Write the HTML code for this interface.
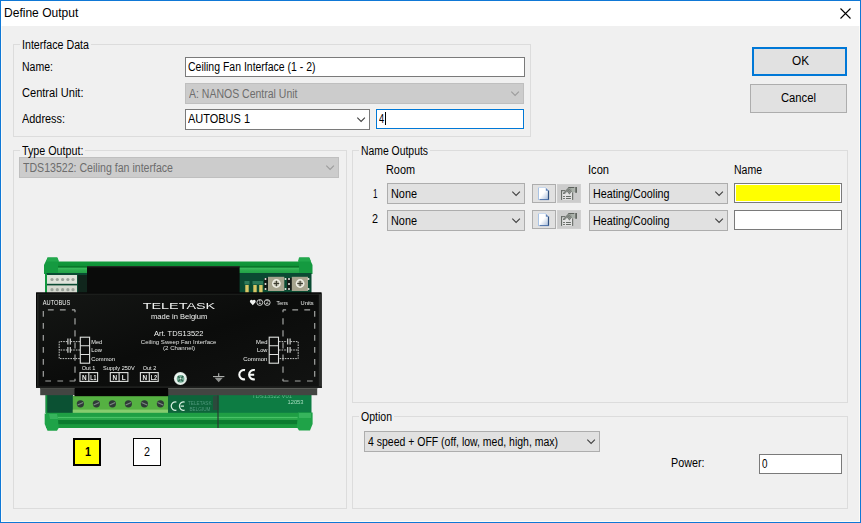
<!DOCTYPE html>
<html><head><meta charset="utf-8"><title>Define Output</title>
<style>
html,body{margin:0;padding:0;}
body{width:861px;height:523px;overflow:hidden;background:#f0f0f0;font-family:"Liberation Sans",sans-serif;font-size:12px;position:relative;}
.a{position:absolute;box-sizing:border-box;}
.t{position:absolute;white-space:pre;line-height:14px;font-size:12px;transform-origin:0 50%;color:#000;}
.gb{position:absolute;box-sizing:border-box;border:1px solid #dcdcdc;}
.gap{position:absolute;background:#f0f0f0;height:3px;}
.inp{position:absolute;box-sizing:border-box;background:#fff;border:1px solid #7a7a7a;}
.cb{position:absolute;box-sizing:border-box;background:#e1e1e1;border:1px solid #adadad;}
.cbd{position:absolute;box-sizing:border-box;background:#cccccc;border:1px solid #bfbfbf;}
.btn{position:absolute;box-sizing:border-box;background:#e1e1e1;border:1px solid #adadad;}
svg{position:absolute;overflow:visible;}
</style></head><body>
<!-- window frame -->
<div class="a" style="left:0;top:0;width:861px;height:523px;border:1px solid #0f78d6;"></div>
<div class="a" style="left:1px;top:1px;width:859px;height:521px;border:1px solid #fcfaf6;"></div>
<div class="a" style="left:1px;top:1px;width:859px;height:25px;background:#fff;"></div>
<svg style="left:840px;top:8px" width="11" height="11" viewBox="0 0 11 11"><path d="M0.5 0.5L10.5 10.5M10.5 0.5L0.5 10.5" stroke="#000" stroke-width="1.1" fill="none"/></svg>

<!-- Interface Data -->
<div class="gb" style="left:13px;top:44px;width:518px;height:93px;"></div>
<div class="gap" style="left:20px;top:43px;width:71px;"></div>
<div class="inp" style="left:185px;top:57px;width:340px;height:20px;"></div>
<div class="cbd" style="left:185px;top:83px;width:339px;height:21px;"></div>
<div class="inp" style="left:185px;top:109px;width:185px;height:21px;"></div>
<div class="inp" style="left:376px;top:109px;width:148px;height:20px;border-color:#0078d7;box-shadow:0 0 0 1px #f8f2ea;"></div>
<div class="a" style="left:385px;top:112px;width:1px;height:13px;background:#000;"></div>

<!-- OK / Cancel -->
<div class="btn" style="left:752px;top:47px;width:95px;height:29px;border:2px solid #0078d7;"></div>
<div class="btn" style="left:750px;top:84px;width:97px;height:29px;"></div>

<!-- Type Output -->
<div class="gb" style="left:13px;top:150px;width:334px;height:359px;"></div>
<div class="gap" style="left:20px;top:149px;width:65px;"></div>
<div class="cbd" style="left:19px;top:157px;width:320px;height:21px;"></div>
<svg style="left:30px;top:252px;will-change:transform;overflow:hidden" width="300" height="182" viewBox="30 252 300 182" font-family="'Liberation Sans',sans-serif">
<defs>
<linearGradient id="railT" x1="0" y1="0" x2="0" y2="1"><stop offset="0" stop-color="#13993c"/><stop offset="0.34" stop-color="#0f9237"/><stop offset="0.40" stop-color="#0a782b"/><stop offset="0.46" stop-color="#0a782b"/><stop offset="0.52" stop-color="#3cbc5e"/><stop offset="0.7" stop-color="#2bab4e"/><stop offset="1" stop-color="#1f9f44"/></linearGradient>
<linearGradient id="railB" x1="0" y1="0" x2="0" y2="1"><stop offset="0" stop-color="#1f9f44"/><stop offset="0.24" stop-color="#1f9f44"/><stop offset="0.28" stop-color="#4cc66a"/><stop offset="0.33" stop-color="#45c064"/><stop offset="0.37" stop-color="#2aa84c"/><stop offset="0.45" stop-color="#27a549"/><stop offset="0.49" stop-color="#0c7c30"/><stop offset="0.73" stop-color="#0c7c30"/><stop offset="0.78" stop-color="#1a9a3e"/><stop offset="1" stop-color="#1a9a3e"/></linearGradient>
<linearGradient id="panel" x1="0" y1="0" x2="1" y2="1"><stop offset="0" stop-color="#151715"/><stop offset="0.5" stop-color="#0b0c0b"/><stop offset="1" stop-color="#121312"/></linearGradient>
</defs>
<!-- top rail -->
<path d="M47.6 257.5H57L58.8 262H298.4L299.4 257.5H309L312.5 265V274H44V265Z" fill="#159a40"/>
<rect x="58" y="261.5" width="241" height="12.5" fill="url(#railT)"/>
<path d="M47.5 257.5H57.5L59 261.5H46.5Z" fill="#22a84c"/>
<path d="M299 257.5H309.5L311 261.5H298Z" fill="#22a84c"/>
<!-- top pcb -->
<rect x="46" y="273" width="265.5" height="20" fill="#0a4a32"/>
<rect x="45" y="273.5" width="2" height="19.5" fill="#12983e"/>
<!-- white connectors -->
<rect x="47" y="275" width="30" height="8.8" fill="#dfe3da"/>
<rect x="47" y="285.4" width="30" height="7.6" fill="#d5d9cf"/>
<g fill="#9aa39a"><circle cx="52" cy="279.5" r="1.6"/><circle cx="57.3" cy="279.5" r="1.6"/><circle cx="62.6" cy="279.5" r="1.6"/><circle cx="67.9" cy="279.5" r="1.6"/><circle cx="73" cy="279.5" r="1.6"/>
<circle cx="52" cy="289.7" r="1.6"/><circle cx="57.3" cy="289.7" r="1.6"/><circle cx="62.6" cy="289.7" r="1.6"/><circle cx="67.9" cy="289.7" r="1.6"/><circle cx="73" cy="289.7" r="1.6"/></g>
<rect x="78" y="275" width="9" height="18" fill="#10261c"/>
<!-- top black block -->
<rect x="87" y="266.3" width="152.6" height="27" fill="#0a0b0a"/>
<rect x="87" y="266.3" width="152.6" height="1" fill="#2a2c2a"/>
<!-- leds -->
<g fill="#d9c766"><rect x="245.3" y="285" width="3.4" height="8"/><rect x="253.3" y="285" width="3.4" height="8"/><rect x="259.2" y="285" width="3.4" height="8"/></g>
<g fill="#2e7a5a"><rect x="244.5" y="281" width="5" height="3.5"/><rect x="252.5" y="281" width="10.5" height="3.5"/></g>
<!-- rotary switches -->
<g>
<rect x="264" y="278" width="5" height="12" fill="#141a16"/><rect x="287" y="278" width="5" height="12" fill="#141a16"/>
<rect x="268" y="276.8" width="16.3" height="14.2" fill="#a6a48e"/><rect x="291.8" y="276.8" width="16.2" height="14.2" fill="#a6a48e"/>
<circle cx="276.4" cy="283.5" r="4.4" fill="#eeeee4"/><circle cx="300.1" cy="283.5" r="4.4" fill="#eeeee4"/><circle cx="276.4" cy="283.5" r="2.7" fill="#b4b4a2"/><circle cx="300.1" cy="283.5" r="2.7" fill="#b4b4a2"/>
<path d="M273.6 283.5H279.2M276.4 280.7V286.3M297.3 283.5H302.9M300.1 280.7V286.3" stroke="#3c3c32" stroke-width="1.1"/>
<g fill="#e8e8e0"><circle cx="265.5" cy="279" r="1"/><circle cx="265.5" cy="284" r="1"/><circle cx="265.5" cy="289" r="1"/><circle cx="285.5" cy="279" r="1"/><circle cx="285.5" cy="289" r="1"/><circle cx="289" cy="279" r="1"/><circle cx="289" cy="284" r="1"/><circle cx="289" cy="289" r="1"/><circle cx="308.5" cy="279" r="1"/><circle cx="308.5" cy="289" r="1"/></g>
</g>
<!-- bottom pcb + terminal -->
<rect x="45.6" y="394" width="27.4" height="19" fill="#0b5133"/><rect x="45.6" y="395" width="1.6" height="18" fill="#14963e"/>
<rect x="168" y="394" width="50" height="19" fill="#0d643a"/>
<rect x="218" y="394" width="93.5" height="19" fill="#0d7c43"/>
<rect x="72.8" y="396" width="95.2" height="17.4" fill="#55b142"/>
<rect x="72.8" y="409.6" width="95.2" height="3.8" fill="#86cc6e"/>
<g fill="#2f3b37"><circle cx="80.4" cy="403.8" r="3.6"/><circle cx="96.4" cy="403.8" r="3.6"/><circle cx="112.4" cy="403.8" r="3.6"/><circle cx="128.4" cy="403.8" r="3.6"/><circle cx="144.4" cy="403.8" r="3.6"/><circle cx="160.4" cy="403.8" r="3.6"/></g>
<path d="M77.6 405L83.2 402.6M93.6 405L99.2 402.6M109.6 405L115.2 402.6M125.6 405L131.2 402.6M141.6 402.6L147.2 405M157.6 402.6L163.2 405" stroke="#7d8a84" stroke-width="1.1"/>
<!-- CE on pcb -->
<g fill="none" stroke="#d4eede" stroke-width="1.25"><path d="M176.4 402.02A4.2 4.2 0 1 0 176.4 410.18"/><path d="M184.6 402.02A4.2 4.2 0 1 0 184.6 410.18M180.6 406.1H184"/></g>
<text x="188" y="405.3" font-size="4.6" fill="#4f987c" textLength="23.5" lengthAdjust="spacingAndGlyphs">TELETASK</text>
<text x="189.5" y="410.8" font-size="4.6" fill="#4f987c" textLength="21" lengthAdjust="spacingAndGlyphs">BELGIUM</text>
<rect x="213" y="396" width="5.5" height="14" fill="#2b4a3c"/>
<text x="252" y="397.6" font-size="5" fill="#5bb98a" textLength="40" lengthAdjust="spacingAndGlyphs">TDS13522 V01</text>
<text x="287.5" y="404" font-size="5.6" fill="#a8dcc0" textLength="16" lengthAdjust="spacingAndGlyphs">12053</text>
<!-- bottom rail -->
<rect x="46" y="412.8" width="265" height="15.2" fill="url(#railB)"/>
<path d="M44.7 413.4H57.5L58.7 428L57 430.7H47.5L44.7 424Z" fill="#1fa348"/>
<path d="M298 412.4H312.6V424L310 430.6H299L296.8 427Z" fill="#1fa348"/>
<path d="M49 414H57L58 419H50Z" fill="#36b45c"/>
<path d="M299 413H311V418H299Z" fill="#36b45c"/>
<rect x="217.4" y="394" width="1.2" height="34" fill="#2a3a32"/>
<!-- gray band under panel -->
<rect x="40.2" y="386" width="277" height="9.2" fill="#434542"/>
<rect x="74.5" y="386" width="93.7" height="10.2" fill="#050505"/>
<rect x="168.2" y="388" width="149" height="1" fill="#5c5e5a"/><rect x="40.2" y="388" width="34.3" height="1" fill="#4c4e4a"/>
<!-- front panel -->
<rect x="36.1" y="292.5" width="285.4" height="95.5" fill="url(#panel)"/>
<rect x="36.6" y="293" width="284.4" height="94.5" fill="none" stroke="#040404" stroke-width="1"/>
<rect x="37.4" y="293.8" width="282" height="1" fill="#1e211e"/>
<rect x="37.3" y="294" width="1.1" height="92" fill="#2a2d2a"/>
<rect x="318.8" y="294" width="2.7" height="94" fill="#2a2c2a"/>
<rect x="36.1" y="386.2" width="285.4" height="1.8" fill="#1d1f1d"/>
<!-- dashed rects -->
<g fill="none" stroke="#a2a4a2" stroke-width="1.2">
<path d="M43.3 311V381" stroke-dasharray="5.8 6.2"/>
<path d="M47.9 309.8H75" stroke-dasharray="5.8 6.2"/>
<path d="M75 309.8V381" stroke-dasharray="6.2 5.9" stroke-dashoffset="3.7"/>
<path d="M45.3 381H75.6" stroke-dasharray="5.7 6.4"/>
</g>
<g fill="none" stroke="#a2a4a2" stroke-width="1.2" transform="translate(358,0) scale(-1,1)">
<path d="M43.3 311V381" stroke-dasharray="5.8 6.2"/>
<path d="M47.9 309.8H75" stroke-dasharray="5.8 6.2"/>
<path d="M75 309.8V381" stroke-dasharray="6.2 5.9" stroke-dashoffset="3.7"/>
<path d="M45.3 381H75.6" stroke-dasharray="5.7 6.4"/>
</g>
<!-- labels -->
<g fill="#f0f2f0">
<text x="42.8" y="305" font-size="6.3" textLength="27.4" lengthAdjust="spacingAndGlyphs">AUTOBUS</text>
<text x="142.7" y="308.9" font-size="9" textLength="72.5" lengthAdjust="spacingAndGlyphs" fill="#f0f2f0">TELETASK</text>
<text x="151" y="319.2" font-size="8" textLength="56.3" lengthAdjust="spacingAndGlyphs">made in Belgium</text>
<text x="154" y="336" font-size="7.8" textLength="49.4" lengthAdjust="spacingAndGlyphs">Art. TDS13522</text>
<text x="140.8" y="343.6" font-size="6.2" textLength="75.6" lengthAdjust="spacingAndGlyphs" fill="#e0e2e0">Ceiling Sweep Fan Interface</text>
<text x="163" y="350.4" font-size="6.2" textLength="32" lengthAdjust="spacingAndGlyphs" fill="#e0e2e0">(2 Channel)</text>
<path d="M252.8 305.2L250.1 302.2A1.5 1.5 0 0 1 252.8 300.6A1.5 1.5 0 0 1 255.5 302.2Z"/><circle cx="259.8" cy="302.5" r="2.9" fill="none" stroke="#e4e6e4" stroke-width="0.9"/><circle cx="267.2" cy="302.5" r="2.9" fill="none" stroke="#e4e6e4" stroke-width="0.9"/><text x="258.6" y="304.2" font-size="4.8">1</text><text x="265.9" y="304.2" font-size="4.8">2</text>
<text x="276.6" y="305" font-size="6.2" textLength="11.2" lengthAdjust="spacingAndGlyphs">Tens</text>
<text x="300.6" y="305" font-size="6.2" textLength="13" lengthAdjust="spacingAndGlyphs">Units</text>
<text x="91.3" y="343.6" font-size="6.2" textLength="10.9" lengthAdjust="spacingAndGlyphs">Med</text>
<text x="91.3" y="352.2" font-size="6.2" textLength="10.5" lengthAdjust="spacingAndGlyphs">Low</text>
<text x="91.3" y="360.8" font-size="6.2" textLength="23.7" lengthAdjust="spacingAndGlyphs">Common</text>
<text x="256" y="343.6" font-size="6.2" textLength="11.4" lengthAdjust="spacingAndGlyphs">Med</text>
<text x="257" y="352.2" font-size="6.2" textLength="10.4" lengthAdjust="spacingAndGlyphs">Low</text>
<text x="243.2" y="360.8" font-size="6.2" textLength="24.2" lengthAdjust="spacingAndGlyphs">Common</text>
<text x="81.7" y="370.2" font-size="6" textLength="13.7" lengthAdjust="spacingAndGlyphs">Out 1</text>
<text x="103" y="370.2" font-size="6" textLength="31.7" lengthAdjust="spacingAndGlyphs">Supply 250V</text>
<text x="142.8" y="370.2" font-size="6" textLength="13.4" lengthAdjust="spacingAndGlyphs">Out 2</text>
<text x="82" y="379.6" font-size="6.4" font-weight="700">N</text><text x="90.3" y="379.6" font-size="6.4" font-weight="700" textLength="6" lengthAdjust="spacingAndGlyphs">L1</text>
<text x="112.4" y="379.6" font-size="6.4" font-weight="700">N</text><text x="121.7" y="379.6" font-size="6.4" font-weight="700">L</text>
<text x="142.4" y="379.6" font-size="6.4" font-weight="700">N</text><text x="150.7" y="379.6" font-size="6.4" font-weight="700" textLength="6.4" lengthAdjust="spacingAndGlyphs">L2</text>
</g>
<!-- terminal boxes -->
<g fill="none" stroke="#e0e2e0" stroke-width="1.1">
<rect x="80.3" y="337.2" width="9.3" height="26"/><path d="M80.3 345.8H89.6M80.3 354.5H89.6"/>
<rect x="269.2" y="337.2" width="9.3" height="26"/><path d="M269.2 345.8H278.5M269.2 354.5H278.5"/>
<rect x="80" y="372.6" width="17.6" height="8.8"/><path d="M88.8 372.6V381.4"/>
<rect x="110.3" y="372.6" width="17.6" height="8.8"/><path d="M119.1 372.6V381.4"/>
<rect x="140.4" y="372.6" width="17.8" height="8.8"/><path d="M149.3 372.6V381.4"/>
</g>
<!-- capacitor circuits -->
<g fill="none" stroke="#c8cac8" stroke-width="1" stroke-dasharray="1.6 1">
<path d="M80 341.6H70.8M67.4 341.6H59.2V358.6H80M80 350H70.8M67.4 350H59.2"/>
<path d="M279 341.6H287.2M290.6 341.6H298.2V358.6H279M279 350H287.2M290.6 350H298.2"/>
</g>
<g stroke="#e0e2e0" stroke-width="1.1"><path d="M67.9 338.6V344.4M70.3 338.6V344.4M67.9 347V352.8M70.3 347V352.8M287.7 338.6V344.4M290.1 338.6V344.4M287.7 347V352.8M290.1 347V352.8"/></g>
<!-- screw -->
<circle cx="180.4" cy="378.5" r="6.5" fill="#dce8e2"/><circle cx="180.2" cy="378.2" r="5.2" fill="#f2f7f4"/><circle cx="180.6" cy="378.8" r="3.9" fill="#6ea890"/>
<path d="M178 376.2L183 381.4M183.2 376L178.2 381.6" stroke="#2f5f4c" stroke-width="1.3"/><circle cx="180.5" cy="378.6" r="1" fill="#cfe6da"/>
<!-- ground symbol -->
<path d="M218.7 373.2V376.6" stroke="#b4b6b4" stroke-width="1.1"/><path d="M213 376.6H224.4" stroke="#bcbebc" stroke-width="1"/><path d="M214.6 377.8H222.8L218.7 382.3Z" fill="#8e908e"/>
<!-- CE -->
<g fill="none" stroke="#f8faf8" stroke-width="2.1"><path d="M245 370.11A4.7 4.7 0 1 0 245 379.29"/><path d="M254.8 370.11A4.7 4.7 0 1 0 254.8 379.29M250.2 374.7H254.2"/></g>
</svg>

<div class="a" style="left:73px;top:438px;width:28px;height:28px;background:#ffff00;border:2px solid #000;"></div>
<div class="a" style="left:133px;top:438px;width:28px;height:28px;background:#fff;border:1px solid #000;"></div>

<!-- Name Outputs -->
<svg style="left:0;top:0" width="0" height="0"><defs><pattern id="chk" width="2" height="2" patternUnits="userSpaceOnUse" patternTransform="rotate(45)"><rect width="2" height="2" fill="#d8dad8"/><rect width="1" height="1" fill="#5a5f5a"/><rect x="1" y="1" width="1" height="1" fill="#5a5f5a"/></pattern></defs></svg>
<div class="gb" style="left:352px;top:150px;width:496px;height:253px;"></div>
<div class="gap" style="left:359px;top:149px;width:71px;"></div>
<div class="cb" style="left:387px;top:183px;width:138px;height:21px;"></div>
<div class="cb" style="left:387px;top:210px;width:138px;height:21px;"></div>
<div class="btn" style="left:532px;top:184px;width:24px;height:19px;"></div>
<div class="btn" style="left:557px;top:184px;width:24px;height:19px;background:#cccccc;border-color:#d0d0d0;"></div>
<div class="btn" style="left:532px;top:210px;width:24px;height:19px;"></div>
<div class="btn" style="left:557px;top:210px;width:24px;height:19px;background:#cccccc;border-color:#d0d0d0;"></div>
<svg style="left:538px;top:187px" width="12" height="14" viewBox="0 0 12 14"><defs><linearGradient id="dg1" x1="0" y1="0" x2="1" y2="1"><stop offset="0.45" stop-color="#ffffff"/><stop offset="1" stop-color="#9db4d6"/></linearGradient></defs><path d="M0.5 0.5H8L11 3.5V13H0.5Z" fill="url(#dg1)"/><path d="M0.5 0.5V13" stroke="#a9c3e4" stroke-width="1"/><path d="M1 0.5H8" stroke="#c9d9ee" stroke-width="1"/><path d="M10.5 3.5V13" stroke="#2f4f7f" stroke-width="1.2"/><path d="M1.5 12.6H11" stroke="#4a70a8" stroke-width="1"/><path d="M7.8 0.8V3.8H10.8Z" fill="#5f83b8"/></svg><svg style="left:561px;top:187px" width="17" height="14" viewBox="0 0 17 14"><rect x="1" y="4.2" width="10.2" height="8.7" fill="#e2e2e2"/><path d="M7.2 0.4H13.6L14.2 5.3H10.6L9 3.2Z" fill="#a9b0a9"/><path d="M7 0.5H13.4" stroke="#5d625d" stroke-width="1"/><rect x="14.3" y="0" width="1.6" height="5.8" fill="#555a55"/><path d="M2.3 5.7L7.3 0.3L11 4.1L8.4 7.8L6 4.6L3.9 6.8Z" fill="#8d928d"/><path d="M3.2 5.8L7.6 1.2M4.2 6.4L8.4 2M6.6 4.4L9.4 1.8M7.4 5.6L10.2 2.8M8.2 6.8L10.8 4" stroke="#5a5f5a" stroke-width="0.7" stroke-dasharray="0.8 0.8"/><path d="M2.2 5.2V6.9H4Z" fill="#555a55"/><rect x="0" y="3.1" width="1.15" height="9.8" fill="#666b66"/><rect x="0" y="3.1" width="4.2" height="1.1" fill="#666b66"/><rect x="11.1" y="5.4" width="1.1" height="7.5" fill="#666b66"/><path d="M2.1 9.45H3.9M5 9.45H9.9M2.1 11.45H3.9M5 11.45H9.9" stroke="#666b66" stroke-width="1.1"/></svg><svg style="left:538px;top:213px" width="12" height="14" viewBox="0 0 12 14"><defs><linearGradient id="dg2" x1="0" y1="0" x2="1" y2="1"><stop offset="0.45" stop-color="#ffffff"/><stop offset="1" stop-color="#9db4d6"/></linearGradient></defs><path d="M0.5 0.5H8L11 3.5V13H0.5Z" fill="url(#dg2)"/><path d="M0.5 0.5V13" stroke="#a9c3e4" stroke-width="1"/><path d="M1 0.5H8" stroke="#c9d9ee" stroke-width="1"/><path d="M10.5 3.5V13" stroke="#2f4f7f" stroke-width="1.2"/><path d="M1.5 12.6H11" stroke="#4a70a8" stroke-width="1"/><path d="M7.8 0.8V3.8H10.8Z" fill="#5f83b8"/></svg><svg style="left:561px;top:213px" width="17" height="14" viewBox="0 0 17 14"><rect x="1" y="4.2" width="10.2" height="8.7" fill="#e2e2e2"/><path d="M7.2 0.4H13.6L14.2 5.3H10.6L9 3.2Z" fill="#a9b0a9"/><path d="M7 0.5H13.4" stroke="#5d625d" stroke-width="1"/><rect x="14.3" y="0" width="1.6" height="5.8" fill="#555a55"/><path d="M2.3 5.7L7.3 0.3L11 4.1L8.4 7.8L6 4.6L3.9 6.8Z" fill="#8d928d"/><path d="M3.2 5.8L7.6 1.2M4.2 6.4L8.4 2M6.6 4.4L9.4 1.8M7.4 5.6L10.2 2.8M8.2 6.8L10.8 4" stroke="#5a5f5a" stroke-width="0.7" stroke-dasharray="0.8 0.8"/><path d="M2.2 5.2V6.9H4Z" fill="#555a55"/><rect x="0" y="3.1" width="1.15" height="9.8" fill="#666b66"/><rect x="0" y="3.1" width="4.2" height="1.1" fill="#666b66"/><rect x="11.1" y="5.4" width="1.1" height="7.5" fill="#666b66"/><path d="M2.1 9.45H3.9M5 9.45H9.9M2.1 11.45H3.9M5 11.45H9.9" stroke="#666b66" stroke-width="1.1"/></svg>
<div class="cb" style="left:589px;top:183px;width:139px;height:21px;"></div>
<div class="cb" style="left:589px;top:210px;width:139px;height:21px;"></div>
<div class="inp" style="left:734px;top:183px;width:108px;height:20px;background:#ffff00;box-shadow:inset 0 0 0 1px #fff;"></div>
<div class="inp" style="left:734px;top:210px;width:108px;height:20px;"></div>

<!-- Option -->
<div class="gb" style="left:352px;top:416px;width:496px;height:93px;"></div>
<div class="gap" style="left:359px;top:415px;width:35px;"></div>
<div class="cb" style="left:364px;top:431px;width:236px;height:21px;"></div>
<div class="inp" style="left:759px;top:454px;width:83px;height:20px;"></div>

<svg style="left:510.5px;top:91px" width="9" height="6" viewBox="0 0 9 6"><path d="M0.3 0.6L4.1 4.4L7.9 0.6" stroke="#9c9c9c" stroke-width="1.1" fill="none"/></svg>
<svg style="left:356.5px;top:117px" width="9" height="6" viewBox="0 0 9 6"><path d="M0.3 0.6L4.1 4.4L7.9 0.6" stroke="#404040" stroke-width="1.1" fill="none"/></svg>
<svg style="left:325.5px;top:165px" width="9" height="6" viewBox="0 0 9 6"><path d="M0.3 0.6L4.1 4.4L7.9 0.6" stroke="#9c9c9c" stroke-width="1.1" fill="none"/></svg>
<svg style="left:511.5px;top:191px" width="9" height="6" viewBox="0 0 9 6"><path d="M0.3 0.6L4.1 4.4L7.9 0.6" stroke="#404040" stroke-width="1.1" fill="none"/></svg>
<svg style="left:511.5px;top:218px" width="9" height="6" viewBox="0 0 9 6"><path d="M0.3 0.6L4.1 4.4L7.9 0.6" stroke="#404040" stroke-width="1.1" fill="none"/></svg>
<svg style="left:714.5px;top:191px" width="9" height="6" viewBox="0 0 9 6"><path d="M0.3 0.6L4.1 4.4L7.9 0.6" stroke="#404040" stroke-width="1.1" fill="none"/></svg>
<svg style="left:714.5px;top:218px" width="9" height="6" viewBox="0 0 9 6"><path d="M0.3 0.6L4.1 4.4L7.9 0.6" stroke="#404040" stroke-width="1.1" fill="none"/></svg>
<svg style="left:586.5px;top:439px" width="9" height="6" viewBox="0 0 9 6"><path d="M0.3 0.6L4.1 4.4L7.9 0.6" stroke="#404040" stroke-width="1.1" fill="none"/></svg>
<span class="t" style="left:4.0px;top:6.00px;transform:scaleX(1.0034);">Define Output</span>
<span class="t" style="left:22px;top:38.00px;transform:scaleX(0.8889);">Interface Data</span>
<span class="t" style="left:21.5px;top:60.00px;transform:scaleX(0.8771);">Name:</span>
<span class="t" style="left:21.5px;top:86.00px;transform:scaleX(0.9220);">Central Unit:</span>
<span class="t" style="left:21.5px;top:112.00px;transform:scaleX(0.9080);">Address:</span>
<span class="t" style="left:187.5px;top:60.00px;transform:scaleX(0.8729);">Ceiling Fan Interface (1 - 2)</span>
<span class="t" style="left:188.8px;top:87.00px;transform:scaleX(0.8747);color:#6d6d6d;">A: NANOS Central Unit</span>
<span class="t" style="left:188px;top:112.00px;transform:scaleX(0.9143);">AUTOBUS 1</span>
<span class="t" style="left:379px;top:112.00px;transform:scaleX(0.7776);">4</span>
<span class="t" style="left:792px;top:54.00px;transform:scaleX(0.9802);">OK</span>
<span class="t" style="left:781px;top:91.00px;transform:scaleX(0.9368);">Cancel</span>
<span class="t" style="left:22px;top:144.00px;transform:scaleX(0.8950);">Type Output:</span>
<span class="t" style="left:23px;top:161.00px;transform:scaleX(0.8818);color:#6d6d6d;">TDS13522: Ceiling fan interface</span>
<span class="t" style="left:361px;top:144.00px;transform:scaleX(0.8659);">Name Outputs</span>
<span class="t" style="left:386px;top:163.00px;transform:scaleX(0.9058);">Room</span>
<span class="t" style="left:588px;top:163.00px;transform:scaleX(0.9256);">Icon</span>
<span class="t" style="left:734px;top:163.00px;transform:scaleX(0.8746);">Name</span>
<span class="t" style="left:373px;top:187.00px;transform:scaleX(0.6729);">1</span>
<span class="t" style="left:372px;top:212.00px;transform:scaleX(0.8972);">2</span>
<span class="t" style="left:391px;top:187.00px;transform:scaleX(0.9063);">None</span>
<span class="t" style="left:391px;top:214.00px;transform:scaleX(0.9063);">None</span>
<span class="t" style="left:593px;top:187.00px;transform:scaleX(0.8959);">Heating/Cooling</span>
<span class="t" style="left:593px;top:214.00px;transform:scaleX(0.8959);">Heating/Cooling</span>
<span class="t" style="left:360.5px;top:410.00px;transform:scaleX(0.8767);">Option</span>
<span class="t" style="left:368px;top:435.00px;transform:scaleX(0.8734);">4 speed + OFF (off, low, med, high, max)</span>
<span class="t" style="left:671px;top:456.00px;transform:scaleX(0.8967);">Power:</span>
<span class="t" style="left:762px;top:457.00px;transform:scaleX(0.8224);">0</span>
<span class="t" style="left:85px;top:445.00px;transform:scaleX(0.8972);font-weight:700;">1</span>
<span class="t" style="left:144px;top:445.00px;transform:scaleX(0.8972);">2</span>
</body></html>
